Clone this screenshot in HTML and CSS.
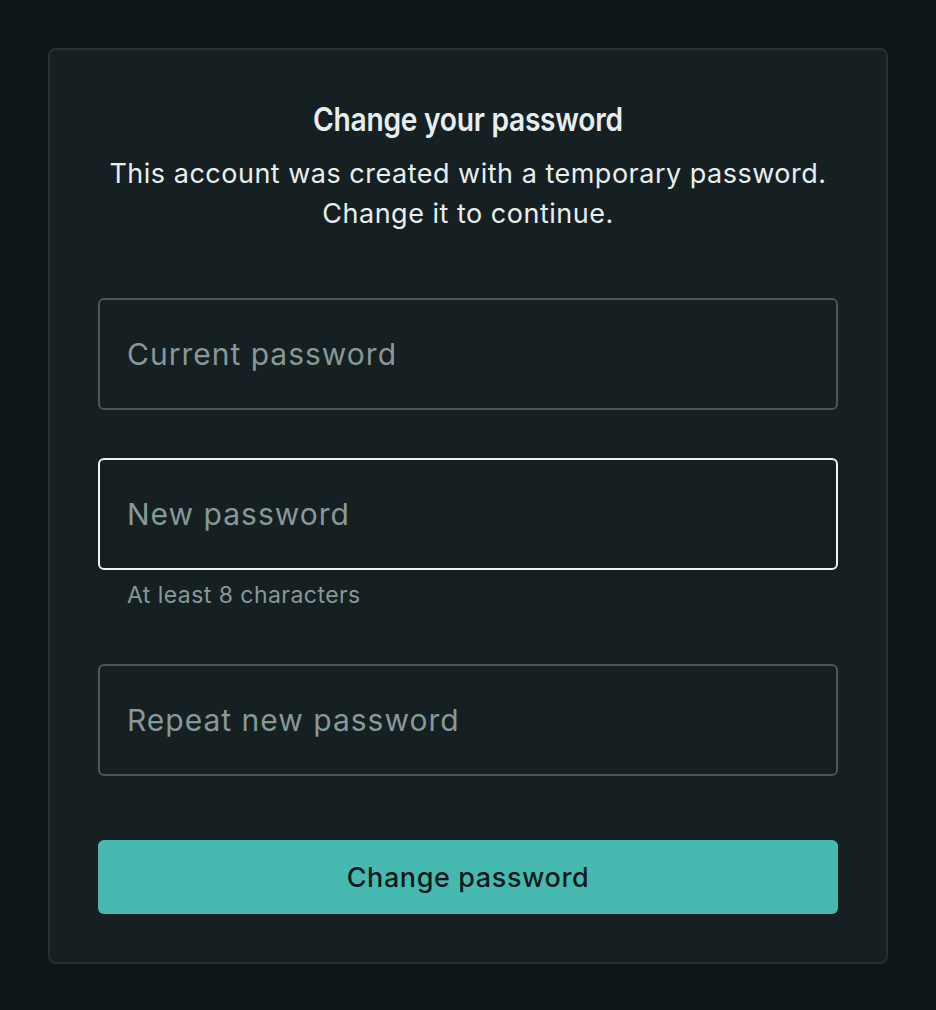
FILE: index.html
```html
<!DOCTYPE html>
<html lang="en">
<head>
<meta charset="utf-8">
<title>Change your password</title>
<link rel="stylesheet" href="styles.css">
</head>
<body>
<main class="card">
  <h1 class="title"><span class="title-text">Change your password</span></h1>
  <p class="subtitle">This account was created with a temporary password.<br>Change it to continue.</p>
  <form class="form">
    <div class="field">
      <input class="input" type="password" placeholder="Current password">
    </div>
    <div class="field">
      <input class="input input-focus" type="password" placeholder="New password">
      <div class="helper">At least 8 characters</div>
    </div>
    <div class="field">
      <input class="input" type="password" placeholder="Repeat new password">
    </div>
    <button class="button" type="button">Change password</button>
  </form>
</main>
</body>
</html>
```
FILE: styles.css
```css
* { box-sizing: border-box; }
html, body { margin: 0; padding: 0; }
body {
  background: #0e1518;
  padding: 48px;
  font-family: Inter, "Noto Sans", sans-serif;
  color: #e6ecec;
  min-height: 1010px;
}
.card {
  width: 840px;
  height: 916px;
  background: #162023;
  border: 2px solid #253334;
  border-radius: 8px;
  padding: 50px 48px 48px;
  display: flex;
  flex-direction: column;
}
.title {
  margin: 0;
  font-weight: 600;
  font-size: 32px;
  line-height: 40px;
  text-align: center;
  color: #e8eeee;
}
.title-text {
  display: inline-block;
  transform: scaleX(0.88);
  letter-spacing: -0.3px;
}
.subtitle {
  margin: 14px 0 0;
  font-size: 27px;
  line-height: 40px;
  letter-spacing: 0.5px;
  text-align: center;
  color: #e8eeee;
}
.form {
  margin-top: 64px;
  display: flex;
  flex-direction: column;
}
.field { margin-bottom: 48px; }
.field:nth-child(2) { margin-bottom: 54px; }
.field:nth-child(3) { margin-bottom: 64px; }
.input {
  display: block;
  width: 100%;
  height: 112px;
  background: transparent;
  border: 2px solid #4a5557;
  border-radius: 6px;
  padding: 0 27px;
  font-family: Inter, sans-serif;
  font-size: 30px;
  letter-spacing: 1px;
  color: #e8eeee;
  outline: none;
}
.input::placeholder { color: #879897; }
.input-focus { border-color: #eef2f2; }
.helper {
  margin-top: 10px;
  padding-left: 29px;
  font-size: 23px;
  line-height: 30px;
  letter-spacing: 0.45px;
  color: #879897;
}
.button {
  height: 74px;
  width: 100%;
  border: none;
  border-radius: 6px;
  background: #46bab0;
  color: #0f1a1b;
  font-family: Inter, sans-serif;
  font-weight: 500;
  font-size: 27px;
  letter-spacing: 0.6px;
  cursor: pointer;
}
```
